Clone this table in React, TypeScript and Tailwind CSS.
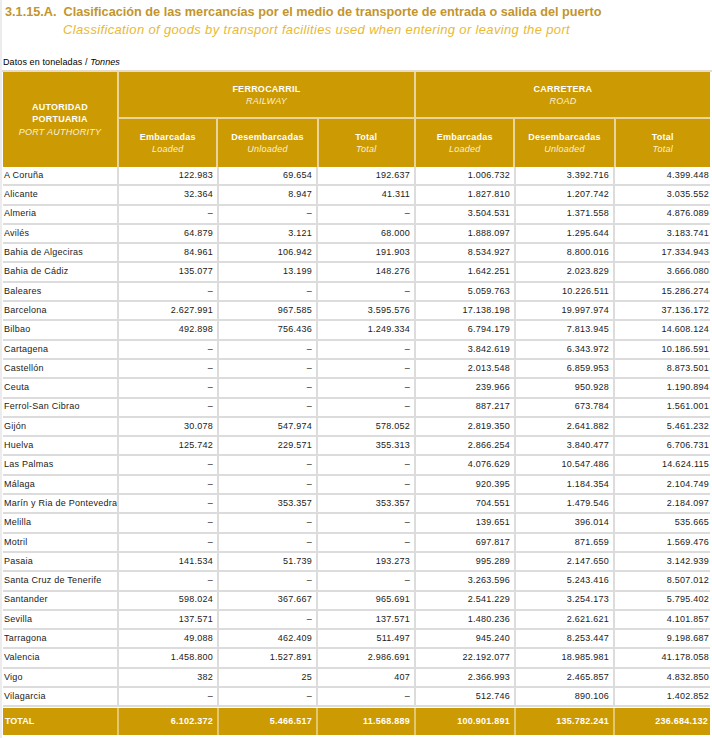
import React from "react";

const rows: string[][] = [
  ["A Coruña", "122.983", "69.654", "192.637", "1.006.732", "3.392.716", "4.399.448"],
  ["Alicante", "32.364", "8.947", "41.311", "1.827.810", "1.207.742", "3.035.552"],
  ["Almeria", "–", "–", "–", "3.504.531", "1.371.558", "4.876.089"],
  ["Avilés", "64.879", "3.121", "68.000", "1.888.097", "1.295.644", "3.183.741"],
  ["Bahia de Algeciras", "84.961", "106.942", "191.903", "8.534.927", "8.800.016", "17.334.943"],
  ["Bahia de Cádiz", "135.077", "13.199", "148.276", "1.642.251", "2.023.829", "3.666.080"],
  ["Baleares", "–", "–", "–", "5.059.763", "10.226.511", "15.286.274"],
  ["Barcelona", "2.627.991", "967.585", "3.595.576", "17.138.198", "19.997.974", "37.136.172"],
  ["Bilbao", "492.898", "756.436", "1.249.334", "6.794.179", "7.813.945", "14.608.124"],
  ["Cartagena", "–", "–", "–", "3.842.619", "6.343.972", "10.186.591"],
  ["Castellón", "–", "–", "–", "2.013.548", "6.859.953", "8.873.501"],
  ["Ceuta", "–", "–", "–", "239.966", "950.928", "1.190.894"],
  ["Ferrol-San Cibrao", "–", "–", "–", "887.217", "673.784", "1.561.001"],
  ["Gijón", "30.078", "547.974", "578.052", "2.819.350", "2.641.882", "5.461.232"],
  ["Huelva", "125.742", "229.571", "355.313", "2.866.254", "3.840.477", "6.706.731"],
  ["Las Palmas", "–", "–", "–", "4.076.629", "10.547.486", "14.624.115"],
  ["Málaga", "–", "–", "–", "920.395", "1.184.354", "2.104.749"],
  ["Marín y Ria de Pontevedra", "–", "353.357", "353.357", "704.551", "1.479.546", "2.184.097"],
  ["Melilla", "–", "–", "–", "139.651", "396.014", "535.665"],
  ["Motril", "–", "–", "–", "697.817", "871.659", "1.569.476"],
  ["Pasaia", "141.534", "51.739", "193.273", "995.289", "2.147.650", "3.142.939"],
  ["Santa Cruz de Tenerife", "–", "–", "–", "3.263.596", "5.243.416", "8.507.012"],
  ["Santander", "598.024", "367.667", "965.691", "2.541.229", "3.254.173", "5.795.402"],
  ["Sevilla", "137.571", "–", "137.571", "1.480.236", "2.621.621", "4.101.857"],
  ["Tarragona", "49.088", "462.409", "511.497", "945.240", "8.253.447", "9.198.687"],
  ["Valencia", "1.458.800", "1.527.891", "2.986.691", "22.192.077", "18.985.981", "41.178.058"],
  ["Vigo", "382", "25", "407", "2.366.993", "2.465.857", "4.832.850"],
  ["Vilagarcia", "–", "–", "–", "512.746", "890.106", "1.402.852"],
];

const totals = ["6.102.372", "5.466.517", "11.568.889", "100.901.891", "135.782.241", "236.684.132"];

const widths = ["w-[114px]", "w-[100px]", "w-[99px]", "w-[98px]", "w-[100px]", "w-[99px]", "w-[97px]"];

function SubHead({ es, en, w }: { es: string; en: string; w: string }) {
  return (
    <div className={`${w} border-l-2 border-[#e9d49a] flex flex-col items-center justify-center leading-[12px]`}>
      <span className="font-bold text-white">{es}</span>
      <span className="italic text-[#fbf1d6]">{en}</span>
    </div>
  );
}

export default function App() {
  return (
    <div
      className="w-[712px] h-[738px] bg-white overflow-hidden text-[#1a1a1a] border-l-[2px] border-[#ececec]"
      style={{ fontFamily: '"Liberation Sans", Arial, sans-serif' }}
    >
      <div className="pl-[3px] pt-[4px] text-[12.7px] leading-[16px] font-bold text-[#c3952d] whitespace-nowrap">
        3.1.15.A.&nbsp; Clasificación de las mercancías por el medio de transporte de entrada o salida del puerto
      </div>
      <div className="pl-[61px] mt-[2px] text-[13px] tracking-[0.35px] leading-[16px] italic text-[#e9b935] whitespace-nowrap">
        Classification of goods by transport facilities used when entering or leaving the port
      </div>
      <div className="pl-[1px] mt-[19px] text-[9px] leading-[11px] text-black tracking-[0.1px]">
        Datos en toneladas / <span className="italic">Tonnes</span>
      </div>
      <div className="border-t-[2px] border-[#e6dccb] mt-[2px]" />
      <div className="ml-[1px] w-[707px] text-[9px] tracking-[0.25px]">
        {/* Header */}
        <div className="flex h-[95px] bg-[#cc9a02] text-white">
          <div className="w-[114px] flex flex-col items-center justify-center leading-[12.5px]">
            <span className="font-bold">AUTORIDAD</span>
            <span className="font-bold">PORTUARIA</span>
            <span className="italic text-[#fbf1d6]">PORT AUTHORITY</span>
          </div>
          <div className="w-[297px] flex flex-col border-l-2 border-[#e9d49a]">
            <div className="h-[47px] border-b-2 border-[#e9d49a] flex flex-col items-center justify-center leading-[12px]">
              <span className="font-bold">FERROCARRIL</span>
              <span className="italic text-[#fbf1d6]">RAILWAY</span>
            </div>
            <div className="flex flex-1">
              <div className="w-[98px] flex flex-col items-center justify-center leading-[12px]">
                <span className="font-bold">Embarcadas</span>
                <span className="italic text-[#fbf1d6]">Loaded</span>
              </div>
              <SubHead es="Desembarcadas" en="Unloaded" w="w-[101px]" />
              <SubHead es="Total" en="Total" w="w-[98px]" />
            </div>
          </div>
          <div className="w-[296px] flex flex-col border-l-2 border-[#e9d49a]">
            <div className="h-[47px] border-b-2 border-[#e9d49a] flex flex-col items-center justify-center leading-[12px]">
              <span className="font-bold">CARRETERA</span>
              <span className="italic text-[#fbf1d6]">ROAD</span>
            </div>
            <div className="flex flex-1">
              <div className="w-[98px] flex flex-col items-center justify-center leading-[12px]">
                <span className="font-bold">Embarcadas</span>
                <span className="italic text-[#fbf1d6]">Loaded</span>
              </div>
              <SubHead es="Desembarcadas" en="Unloaded" w="w-[101px]" />
              <SubHead es="Total" en="Total" w="w-[97px]" />
            </div>
          </div>
        </div>
        {/* Body */}
        <div>
          {rows.map((r, i) => (
            <div key={i} className="flex h-[19.3px] border-b-2 border-[#dcdcdc]">
              {r.map((c, j) => (
                <div
                  key={j}
                  className={`${j === 0 ? "w-[114px] pl-[1px] justify-start" : widths[j] + " border-l-2 border-[#dcdcdc] justify-end " + (j === 6 ? "pr-[1px]" : "pr-[4px]")} flex items-center whitespace-nowrap`}
                >
                  {c}
                </div>
              ))}
            </div>
          ))}
        </div>
        {/* Total */}
        <div className="flex h-[27px] bg-[#cc9a02] text-white font-bold mt-[1px]">
          <div className="w-[114px] flex items-center pl-[2px] tracking-normal">TOTAL</div>
          {totals.map((t, j) => (
            <div
              key={j}
              className={`${widths[j + 1]} border-l-2 border-[#e3c76e] flex items-center justify-end ${j === 5 ? "pr-[2px]" : "pr-[4px]"}`}
            >
              {t}
            </div>
          ))}
        </div>
      </div>
    </div>
  );
}
